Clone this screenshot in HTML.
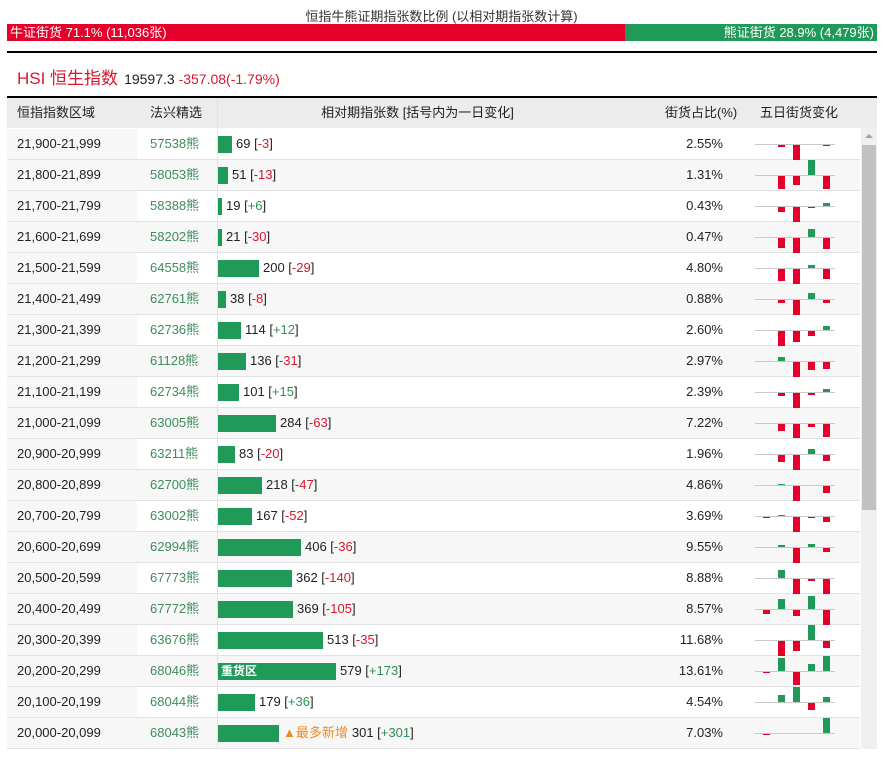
<!DOCTYPE html>
<html><head><meta charset="utf-8"><style>
*{margin:0;padding:0;box-sizing:border-box}
body{width:883px;height:758px;overflow:hidden;background:#fff;font-family:"Liberation Sans","Noto Sans CJK SC",sans-serif;font-size:13px;color:#222;position:relative}
.t{position:absolute;top:6px;left:0;width:883px;text-align:center;font-size:13px;color:#333}
.bar{position:absolute;top:24px;height:17px;color:#fff;font-size:13px;line-height:17px}
.hl{position:absolute;top:51px;left:7px;width:870px;height:2px;background:#000}
.hsi{position:absolute;top:64px;left:17px;font-size:17px;color:#d9162c}
.hsi span{font-size:14px;color:#222;margin-left:6px}
.hsi em{font-style:normal;color:#d9162c}
.hd{position:absolute;top:96px;left:7px;width:870px;height:32px;border-top:2px solid #000;background:#ececec;font-size:13px;line-height:30px}
.hd div{position:absolute;top:0}
.r{position:absolute;left:7px;width:853px;height:31px;border-bottom:1px solid #e3e3e3;line-height:30px}
.r.g{background:#f7f7f7}
.r>span{position:absolute;top:0;height:30px}
.c1{left:0;width:130px;background:#f7f7f7;padding-left:10px}
.c2{left:130px;width:80px;padding-left:13px;color:#3f8c5c}
.c3{left:210px;width:400px;border-left:1px solid #e3e3e3;display:flex;align-items:center}
.c3 i{display:inline-block;height:17px;background:#1f9a59;margin-right:4px;color:#fff;font-style:normal;font-weight:bold;font-size:12px;line-height:17px;padding-left:3px;overflow:hidden;white-space:nowrap}
.n{color:#d9162c}.p{color:#2f8f56}
.c4{left:600px;width:116px;text-align:right}
.ch{left:748px;width:80px}
.ch u{position:absolute;left:0;top:15px;width:80px;height:1px;background:#c8c8c8}
.ch s{position:absolute;width:7px}
.ch s.up{background:#1f9a59}.ch s.dn{background:#e4002b}
.sb{position:absolute;left:861px;top:128px;width:16px;height:621px;background:#f0f0f0}
.sb div{position:absolute;left:1px;top:17px;width:14px;height:365px;background:#c1c1c1}
.sb b{position:absolute;left:4px;top:6px;border:4px solid transparent;border-bottom:4px solid #a0a0a0;border-top:0}
.new{color:#f08c1e;margin-right:4px}
</style></head><body>
<div class="t">恒指牛熊证期指张数比例 (以相对期指张数计算)</div>
<div class="bar" style="left:7px;width:618px;background:#e4002b;padding-left:3px">牛证街货 71.1% (11,036张)</div>
<div class="bar" style="left:625px;width:252px;background:#1f9a59;text-align:right;padding-right:3px">熊证街货 28.9% (4,479张)</div>
<div class="hl"></div>
<div class="hsi">HSI 恒生指数<span>19597.3 <em>-357.08(-1.79%)</em></span></div>
<div class="hd">
<div style="left:10px">恒指指数区域</div>
<div style="left:143px">法兴精选</div>
<div style="left:210px;width:400px;height:30px;border-left:1px solid #e0e0e0;text-align:center">相对期指张数 [括号内为一日变化]</div>
<div style="left:658px">街货占比(%)</div>
<div style="left:753px">五日街货变化</div>
</div>

<div class="r" style="top:129px"><span class="c1">21,900-21,999</span><span class="c2">57538熊</span><span class="c3"><i style="width:14px"></i>69 [<b class="n" style="font-weight:normal">-3</b>]</span><span class="c4">2.55%</span><span class="ch"><u></u><s class="dn" style="left:23px;top:16px;height:2px"></s><s class="dn" style="left:38px;top:16px;height:15px"></s><s class="dn" style="left:68px;top:16px;height:1px"></s></span></div>
<div class="r g" style="top:160px"><span class="c1">21,800-21,899</span><span class="c2">58053熊</span><span class="c3"><i style="width:10px"></i>51 [<span class="n">-13</span>]</span><span class="c4">1.31%</span><span class="ch"><u></u><s class="dn" style="left:23px;top:16px;height:13px"></s><s class="dn" style="left:38px;top:16px;height:9px"></s><s class="up" style="left:53px;top:0px;height:15px"></s><s class="dn" style="left:68px;top:16px;height:13px"></s></span></div>
<div class="r" style="top:191px"><span class="c1">21,700-21,799</span><span class="c2">58388熊</span><span class="c3"><i style="width:4px"></i>19 [<span class="p">+6</span>]</span><span class="c4">0.43%</span><span class="ch"><u></u><s class="dn" style="left:23px;top:16px;height:5px"></s><s class="dn" style="left:38px;top:16px;height:15px"></s><s class="dn" style="left:53px;top:16px;height:1px"></s><s class="up" style="left:68px;top:12px;height:3px"></s></span></div>
<div class="r g" style="top:222px"><span class="c1">21,600-21,699</span><span class="c2">58202熊</span><span class="c3"><i style="width:4px"></i>21 [<span class="n">-30</span>]</span><span class="c4">0.47%</span><span class="ch"><u></u><s class="dn" style="left:23px;top:16px;height:10px"></s><s class="dn" style="left:38px;top:16px;height:15px"></s><s class="up" style="left:53px;top:7px;height:8px"></s><s class="dn" style="left:68px;top:16px;height:11px"></s></span></div>
<div class="r" style="top:253px"><span class="c1">21,500-21,599</span><span class="c2">64558熊</span><span class="c3"><i style="width:41px"></i>200 [<span class="n">-29</span>]</span><span class="c4">4.80%</span><span class="ch"><u></u><s class="dn" style="left:23px;top:16px;height:12px"></s><s class="dn" style="left:38px;top:16px;height:15px"></s><s class="up" style="left:53px;top:12px;height:3px"></s><s class="dn" style="left:68px;top:16px;height:10px"></s></span></div>
<div class="r g" style="top:284px"><span class="c1">21,400-21,499</span><span class="c2">62761熊</span><span class="c3"><i style="width:8px"></i>38 [<span class="n">-8</span>]</span><span class="c4">0.88%</span><span class="ch"><u></u><s class="dn" style="left:23px;top:16px;height:3px"></s><s class="dn" style="left:38px;top:16px;height:15px"></s><s class="up" style="left:53px;top:9px;height:6px"></s><s class="dn" style="left:68px;top:16px;height:3px"></s></span></div>
<div class="r" style="top:315px"><span class="c1">21,300-21,399</span><span class="c2">62736熊</span><span class="c3"><i style="width:23px"></i>114 [<span class="p">+12</span>]</span><span class="c4">2.60%</span><span class="ch"><u></u><s class="dn" style="left:23px;top:16px;height:15px"></s><s class="dn" style="left:38px;top:16px;height:11px"></s><s class="dn" style="left:53px;top:16px;height:5px"></s><s class="up" style="left:68px;top:11px;height:4px"></s></span></div>
<div class="r g" style="top:346px"><span class="c1">21,200-21,299</span><span class="c2">61128熊</span><span class="c3"><i style="width:28px"></i>136 [<span class="n">-31</span>]</span><span class="c4">2.97%</span><span class="ch"><u></u><s class="up" style="left:23px;top:11px;height:4px"></s><s class="dn" style="left:38px;top:16px;height:15px"></s><s class="dn" style="left:53px;top:16px;height:8px"></s><s class="dn" style="left:68px;top:16px;height:7px"></s></span></div>
<div class="r" style="top:377px"><span class="c1">21,100-21,199</span><span class="c2">62734熊</span><span class="c3"><i style="width:21px"></i>101 [<span class="p">+15</span>]</span><span class="c4">2.39%</span><span class="ch"><u></u><s class="dn" style="left:23px;top:16px;height:3px"></s><s class="dn" style="left:38px;top:16px;height:15px"></s><s class="dn" style="left:53px;top:16px;height:2px"></s><s class="up" style="left:68px;top:12px;height:3px"></s></span></div>
<div class="r g" style="top:408px"><span class="c1">21,000-21,099</span><span class="c2">63005熊</span><span class="c3"><i style="width:58px"></i>284 [<span class="n">-63</span>]</span><span class="c4">7.22%</span><span class="ch"><u></u><s class="dn" style="left:23px;top:16px;height:7px"></s><s class="dn" style="left:38px;top:16px;height:14px"></s><s class="dn" style="left:53px;top:16px;height:3px"></s><s class="dn" style="left:68px;top:16px;height:13px"></s></span></div>
<div class="r" style="top:439px"><span class="c1">20,900-20,999</span><span class="c2">63211熊</span><span class="c3"><i style="width:17px"></i>83 [<span class="n">-20</span>]</span><span class="c4">1.96%</span><span class="ch"><u></u><s class="dn" style="left:23px;top:16px;height:7px"></s><s class="dn" style="left:38px;top:16px;height:15px"></s><s class="up" style="left:53px;top:10px;height:5px"></s><s class="dn" style="left:68px;top:16px;height:6px"></s></span></div>
<div class="r g" style="top:470px"><span class="c1">20,800-20,899</span><span class="c2">62700熊</span><span class="c3"><i style="width:44px"></i>218 [<span class="n">-47</span>]</span><span class="c4">4.86%</span><span class="ch"><u></u><s class="up" style="left:23px;top:14px;height:1px"></s><s class="dn" style="left:38px;top:16px;height:15px"></s><s class="dn" style="left:68px;top:16px;height:7px"></s></span></div>
<div class="r" style="top:501px"><span class="c1">20,700-20,799</span><span class="c2">63002熊</span><span class="c3"><i style="width:34px"></i>167 [<span class="n">-52</span>]</span><span class="c4">3.69%</span><span class="ch"><u></u><s class="dn" style="left:8px;top:16px;height:1px"></s><s class="up" style="left:23px;top:14px;height:1px"></s><s class="dn" style="left:38px;top:16px;height:15px"></s><s class="dn" style="left:53px;top:16px;height:1px"></s><s class="dn" style="left:68px;top:16px;height:5px"></s></span></div>
<div class="r g" style="top:532px"><span class="c1">20,600-20,699</span><span class="c2">62994熊</span><span class="c3"><i style="width:83px"></i>406 [<span class="n">-36</span>]</span><span class="c4">9.55%</span><span class="ch"><u></u><s class="up" style="left:23px;top:13px;height:2px"></s><s class="dn" style="left:38px;top:16px;height:15px"></s><s class="up" style="left:53px;top:12px;height:3px"></s><s class="dn" style="left:68px;top:16px;height:4px"></s></span></div>
<div class="r" style="top:563px"><span class="c1">20,500-20,599</span><span class="c2">67773熊</span><span class="c3"><i style="width:74px"></i>362 [<span class="n">-140</span>]</span><span class="c4">8.88%</span><span class="ch"><u></u><s class="up" style="left:23px;top:7px;height:8px"></s><s class="dn" style="left:38px;top:16px;height:15px"></s><s class="dn" style="left:53px;top:16px;height:2px"></s><s class="dn" style="left:68px;top:16px;height:15px"></s></span></div>
<div class="r g" style="top:594px"><span class="c1">20,400-20,499</span><span class="c2">67772熊</span><span class="c3"><i style="width:75px"></i>369 [<span class="n">-105</span>]</span><span class="c4">8.57%</span><span class="ch"><u></u><s class="dn" style="left:8px;top:16px;height:4px"></s><s class="up" style="left:23px;top:5px;height:10px"></s><s class="dn" style="left:38px;top:16px;height:6px"></s><s class="up" style="left:53px;top:2px;height:13px"></s><s class="dn" style="left:68px;top:16px;height:15px"></s></span></div>
<div class="r" style="top:625px"><span class="c1">20,300-20,399</span><span class="c2">63676熊</span><span class="c3"><i style="width:105px"></i>513 [<span class="n">-35</span>]</span><span class="c4">11.68%</span><span class="ch"><u></u><s class="dn" style="left:23px;top:16px;height:15px"></s><s class="dn" style="left:38px;top:16px;height:10px"></s><s class="up" style="left:53px;top:0px;height:15px"></s><s class="dn" style="left:68px;top:16px;height:7px"></s></span></div>
<div class="r g" style="top:656px"><span class="c1">20,200-20,299</span><span class="c2">68046熊</span><span class="c3"><i style="width:118px">重货区</i>579 [<span class="p">+173</span>]</span><span class="c4">13.61%</span><span class="ch"><u></u><s class="dn" style="left:8px;top:16px;height:1px"></s><s class="up" style="left:23px;top:2px;height:13px"></s><s class="dn" style="left:38px;top:16px;height:13px"></s><s class="up" style="left:53px;top:8px;height:7px"></s><s class="up" style="left:68px;top:0px;height:15px"></s></span></div>
<div class="r" style="top:687px"><span class="c1">20,100-20,199</span><span class="c2">68044熊</span><span class="c3"><i style="width:37px"></i>179 [<span class="p">+36</span>]</span><span class="c4">4.54%</span><span class="ch"><u></u><s class="up" style="left:23px;top:8px;height:7px"></s><s class="up" style="left:38px;top:0px;height:15px"></s><s class="dn" style="left:53px;top:16px;height:7px"></s><s class="up" style="left:68px;top:10px;height:5px"></s></span></div>
<div class="r g" style="top:718px"><span class="c1">20,000-20,099</span><span class="c2">68043熊</span><span class="c3"><i style="width:61px"></i><span class="new">▲最多新增</span>301 [<span class="p">+301</span>]</span><span class="c4">7.03%</span><span class="ch"><u></u><s class="dn" style="left:8px;top:16px;height:1px"></s><s class="up" style="left:68px;top:0px;height:15px"></s></span></div>

<div class="sb"><b></b><div></div></div>
</body></html>
